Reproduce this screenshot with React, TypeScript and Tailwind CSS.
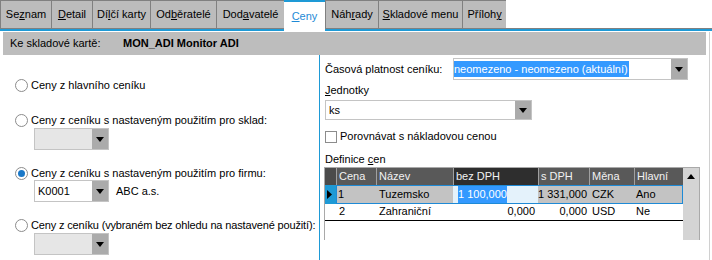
import React from 'react';

const tabs = [
  { pre: 'Se', u: 'z', post: 'nam', w: 'w-[51px]' },
  { pre: '', u: 'D', post: 'etail', w: 'w-[41px]' },
  { pre: 'Dí', u: 'l', post: 'čí karty', w: 'w-[58px]' },
  { pre: 'Od', u: 'b', post: 'ěratelé', w: 'w-[66px]' },
  { pre: 'Dod', u: 'a', post: 'vatelé', w: 'w-[68px]' },
  { pre: '', u: 'C', post: 'eny', w: 'w-[41px]', active: true },
  { pre: 'Náh', u: 'r', post: 'ady', w: 'w-[53px]' },
  { pre: '', u: 'S', post: 'kladové menu', w: 'w-[84px]' },
  { pre: 'Příloh', u: 'y', post: '', w: 'w-[44px]' },
];

// small black arrow used in combo buttons
function Arrow({ up = false }: { up?: boolean }) {
  return (
    <svg width="8" height="5" viewBox="0 0 8 5">
      <path d={up ? 'M0 5 L4 0 L8 5 Z' : 'M0 0 L8 0 L4 5 Z'} fill="#000" />
    </svg>
  );
}

function Combo({ w, h = 'h-[22px]', disabled = false, children }: { w: string; h?: string; disabled?: boolean; children?: React.ReactNode }) {
  return (
    <div className={`${w} ${h} flex border border-[#c4c4c4] ${disabled ? 'bg-[#e6e6e6]' : 'bg-white'}`}>
      <div className="flex-1 flex items-center min-w-0 whitespace-nowrap">{children}</div>
      <div className="w-[16px] bg-[#ababab] flex items-center justify-center">
        <Arrow />
      </div>
    </div>
  );
}

function Radio({ checked = false, label, tight = false }: { checked?: boolean; label: string; tight?: boolean }) {
  return (
    <div className="flex items-center h-[14px] pl-[15px] whitespace-nowrap">
      <div className="w-[13px] h-[13px] shrink-0 rounded-full border border-[#8c8c8c] bg-white flex items-center justify-center">
        {checked && <div className="w-[7px] h-[7px] rounded-full bg-[#1a78c8]" />}
      </div>
      <span className={`ml-[3px] ${tight ? 'tracking-[-0.15px]' : ''}`}>{label}</span>
    </div>
  );
}

export default function App() {
  return (
    <div className="w-[712px] h-[260px] bg-white overflow-hidden text-[11px] text-black font-['Liberation_Sans',Arial,sans-serif]">
      {/* Tab strip */}
      <div className="flex h-[32px]">
        {tabs.map((t, i) =>
          t.active ? (
            <div key={i} className={`${t.w} h-full flex flex-col`}>
              <div className="h-[31px] bg-white border-t-2 border-[#1e9ad6] flex items-center justify-center text-[#1e8ad6]">
                <span>
                  {t.pre}
                  <span className="underline">{t.u}</span>
                  {t.post}
                </span>
              </div>
              <div className="h-[1px] bg-white" />
            </div>
          ) : (
            <div key={i} className={`${t.w} h-full flex flex-col`}>
              <div className="h-[29px] bg-[#bcbcbc] border-t border-l border-b border-[#808080] flex items-center justify-center">
                <span>
                  {t.pre}
                  <span className="underline">{t.u}</span>
                  {t.post}
                </span>
              </div>
              <div className="h-[2px] bg-[#1e9ad6]" />
            </div>
          )
        )}
        <div className="flex-1 h-full flex flex-col">
          <div className="h-[29px] bg-white border-b border-[#808080]" />
          <div className="h-[2px] bg-[#1e9ad6]" />
        </div>
      </div>

      {/* Content */}
      <div className="h-[228px] pl-[3px] pr-[2px] flex flex-col">
        <div className="flex-1 flex flex-col border-r border-[#d0d0d0] pr-[3px]">
          <div className="h-[23px] bg-[#bdbdbd] flex items-center pl-[7px]">
            <span className="w-[113px]">Ke skladové kartě:</span>
            <span className="font-bold">MON_ADI Monitor ADI</span>
          </div>

          <div className="flex-1 flex">
            {/* Left panel */}
            <div className="w-[319px] shrink-0 flex flex-col pt-[23px] -ml-[3px]">
              <Radio label="Ceny z hlavního ceníku" />
              <div className="mt-[21px]">
                <Radio label="Ceny z ceníku s nastaveným použitím pro sklad:" />
              </div>
              <div className="mt-[1px] pl-[34px]">
                <Combo w="w-[75px]" disabled />
              </div>
              <div className="mt-[16px]">
                <Radio checked label="Ceny z ceníku s nastaveným použitím pro firmu:" />
              </div>
              <div className="pl-[34px] flex items-center">
                <Combo w="w-[75px]">
                  <span className="pl-[3px]">K0001</span>
                </Combo>
                <span className="ml-[7px]">ABC a.s.</span>
              </div>
              <div className="mt-[16px]">
                <Radio tight label="Ceny z ceníku (vybraném bez ohledu na nastavené použití):" />
              </div>
              <div className="mt-[1px] pl-[34px]">
                <Combo w="w-[75px]" disabled />
              </div>
            </div>

            {/* Right panel */}
            <div className="flex-1 border-l border-[#1e9ad6] flex flex-col pl-[4px]">
              <div className="mt-[3px] flex items-center">
                <span className="w-[129px] pl-[1px]">Časová platnost ceníku:</span>
                <Combo w="w-[235px]">
                  <span className="bg-[#3399ff] text-white pr-[1px]">neomezeno - neomezeno (aktuální)</span>
                </Combo>
              </div>
              <div className="h-[20px] flex items-center pl-[1px]">
                <span>
                  <span className="underline">J</span>ednotky
                </span>
              </div>
              <div className="pl-[1px]">
                <Combo w="w-[207px]" h="h-[20px]">
                  <span className="pl-[3px]">ks</span>
                </Combo>
              </div>
              <div className="mt-[10px] flex items-center h-[13px] pl-[1px]">
                <div className="w-[12px] h-[12px] border border-[#8c8c8c] bg-white" />
                <span className="ml-[3px]">Porovnávat s nákladovou cenou</span>
              </div>
              <div className="mt-[9px] h-[14px] flex items-center pl-[1px]">
                <span>
                  Definice <span className="underline">c</span>en
                </span>
              </div>

              {/* Grid */}
              <div className="mt-[1px] w-[376px] h-[73px] border-t border-l border-r border-[#a9a9a9] flex">
                <div className="flex flex-col">
                  <div className="grid grid-cols-[11px_40px_77px_85px_51px_45px_49px] h-[17px] bg-[#595959] text-[#f2f2f2]">
                    <div className="bg-[#4b4b4b]" />
                    <div className="border-l border-[#a0a0a0] pl-[2px] flex items-center">Cena</div>
                    <div className="border-l border-[#a0a0a0] pl-[2px] flex items-center">Název</div>
                    <div className="border-l border-[#a0a0a0] bg-[#2e2e2e] pl-[2px] flex items-center">bez DPH</div>
                    <div className="border-l border-[#a0a0a0] pl-[2px] flex items-center">s DPH</div>
                    <div className="border-l border-[#a0a0a0] pl-[2px] flex items-center">Měna</div>
                    <div className="border-l border-[#a0a0a0] pl-[2px] flex items-center">Hlavní</div>
                  </div>
                  <div className="grid grid-cols-[11px_40px_77px_85px_51px_45px_49px] h-[18px] border-b border-black">
                    <div className="bg-[#1e9ad6] flex items-center pl-[2px]">
                      <svg width="5" height="9" viewBox="0 0 5 9">
                        <path d="M0 0 L5 4.5 L0 9 Z" fill="#000" />
                      </svg>
                    </div>
                    <div className="col-span-6 grid grid-cols-[40px_77px_85px_51px_45px_49px] bg-[#c3c3c3] shadow-[inset_0_0_0_1px_#1e8ad6]">
                      <div className="pl-[2px] flex items-center">1</div>
                      <div className="pl-[3px] flex items-center">Tuzemsko</div>
                      <div className="my-[1px] bg-[#e4f2fb] flex items-center pl-[5px]">
                        <span className="bg-[#3399ff] text-white">1 100,000</span>
                      </div>
                      <div className="flex items-center justify-end pr-[2px]">1 331,000</div>
                      <div className="pl-[3px] flex items-center">CZK</div>
                      <div className="pl-[2px] flex items-center">Ano</div>
                    </div>
                  </div>
                  <div className="grid grid-cols-[11px_40px_77px_85px_51px_45px_49px] h-[18px] border-b border-black">
                    <div />
                    <div className="pl-[3px] flex items-center">2</div>
                    <div className="pl-[3px] flex items-center">Zahraniční</div>
                    <div className="flex items-center justify-end pr-[3px]">0,000</div>
                    <div className="flex items-center justify-end pr-[2px]">0,000</div>
                    <div className="pl-[3px] flex items-center">USD</div>
                    <div className="pl-[2px] flex items-center">Ne</div>
                  </div>
                </div>
                {/* Scrollbar */}
                <div className="flex-1 bg-[#d4d4d4] flex flex-col">
                  <div className="h-[17px] flex items-center justify-center">
                    <Arrow up />
                  </div>
                </div>
              </div>
            </div>
          </div>
        </div>
      </div>
    </div>
  );
}
